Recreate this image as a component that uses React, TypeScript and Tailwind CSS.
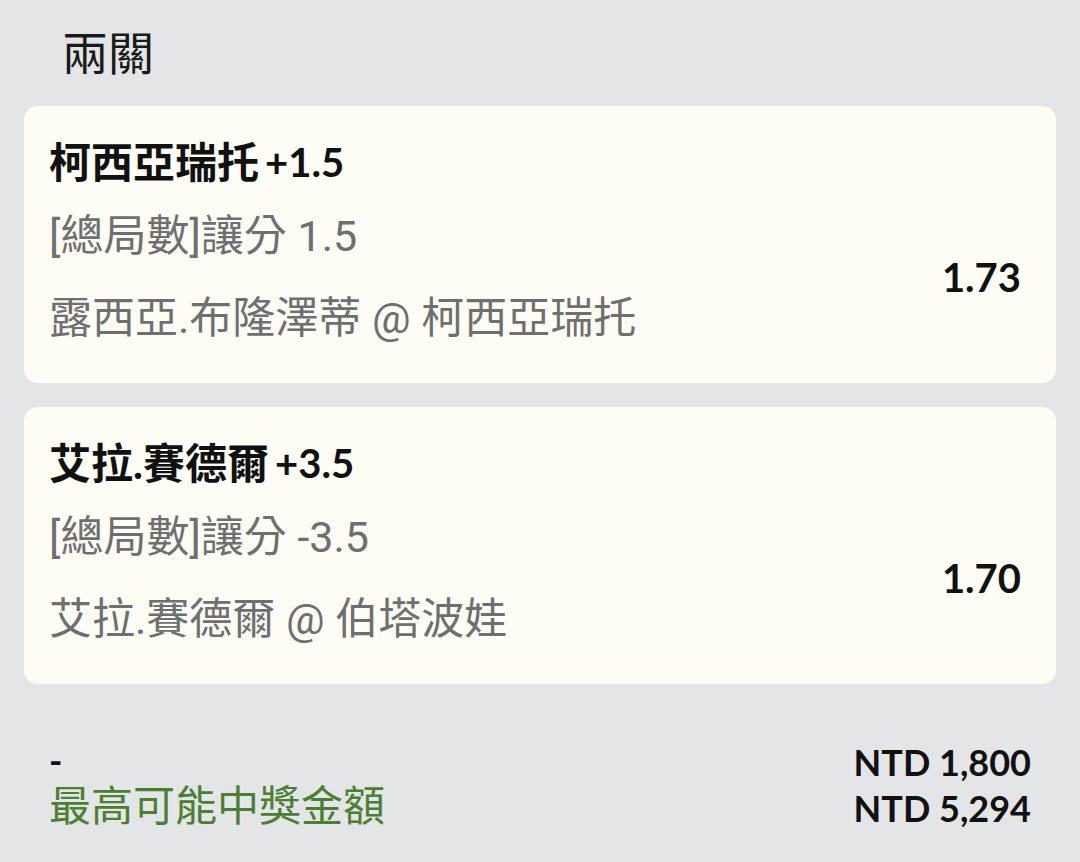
import React from "react";

const sub = "font-['Roboto','Noto_Sans_CJK_TC',sans-serif]";

function Card({ title, num, line, match, odds }: { title: string; num: string; line: string; match: string; odds: string }) {
  return (
    <div className="rounded-[14px] bg-[#fdfdf6] pl-[25px] pr-[35px] pt-[28px] pb-[37px]">
      <div className="flex h-[56px] items-center font-['Lato','Noto_Sans_CJK_TC',sans-serif] text-[42px] font-bold text-[#111]">
        <span>{title}</span>
        <span className="ml-[6px] text-[40px]">{num}</span>
      </div>
      <div className="mt-[18px] flex items-center justify-between">
        <div className={`${sub} text-[43px] leading-[56px] text-[#6f6f6f]`}>
          <div>{line}</div>
          <div className="mt-[26px]">{match}</div>
        </div>
        <div className="font-['Lato',sans-serif] text-[40px] font-bold text-[#111]">{odds}</div>
      </div>
    </div>
  );
}

export default function App() {
  return (
    <div className="h-[862px] w-[1080px] overflow-hidden bg-[#e4e5e7] font-['Lato','Noto_Sans_CJK_TC',sans-serif]">
      <div className="flex h-[106px] items-start pl-[62px] pt-[22px]">
        <span className="font-['Noto_Sans_CJK_TC',sans-serif] text-[46px] font-normal leading-[56px] text-[#1a1a1a]">兩關</span>
      </div>
      <div className="flex flex-col gap-[24px] px-[24px]">
        <Card title="柯西亞瑞托" num="+1.5" line="[總局數]讓分 1.5" match="露西亞.布隆澤蒂 @ 柯西亞瑞托" odds="1.73" />
        <Card title="艾拉.賽德爾" num="+3.5" line="[總局數]讓分 -3.5" match="艾拉.賽德爾 @ 伯塔波娃" odds="1.70" />
      </div>
      <div className="mt-[55px] flex items-start justify-between px-[49px]">
        <div className="flex flex-col">
          <div className="h-[40px] pt-[3px] font-['Lato',sans-serif] text-[36px] font-bold leading-[37px] text-[#111]">-</div>
          <div className="font-['Noto_Sans_CJK_TC',sans-serif] text-[42px] leading-[48px] text-[#4c7e34]">最高可能中獎金額</div>
        </div>
        <div className="flex flex-col items-end font-['Lato',sans-serif] text-[36px] font-bold leading-[46px] text-[#111]">
          <div>NTD 1,800</div>
          <div>NTD 5,294</div>
        </div>
      </div>
    </div>
  );
}
